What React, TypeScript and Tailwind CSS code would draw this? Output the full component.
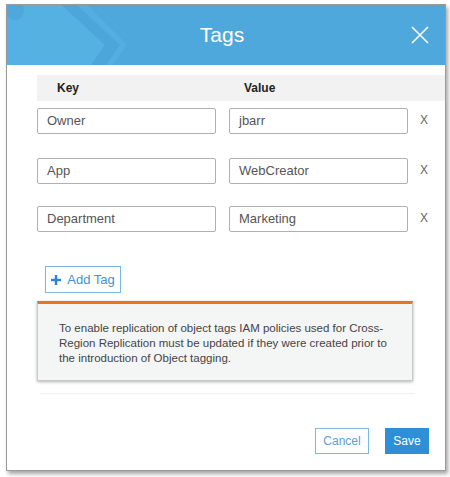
import React from "react";

const rows = [
  { k: "Owner", v: "jbarr", top: "mt-[7px]" },
  { k: "App", v: "WebCreator", top: "mt-[24px]" },
  { k: "Department", v: "Marketing", top: "mt-[22px]" },
];

export default function App() {
  return (
    <div className="w-[450px] h-[477px] bg-white pt-[4px] pl-[6px]" style={{ fontFamily: '"Liberation Sans", Arial, sans-serif' }}>
      <div className="w-[440px] h-[467px] border border-[#9a9a9a] bg-white shadow-[2px_3px_4px_rgba(0,0,0,0.35)] flex flex-col">
        {/* Header */}
        <div className="relative h-[60px] bg-[#4fa8dc] flex items-center justify-center overflow-hidden">
          <svg className="absolute left-0 top-0" width="140" height="60" viewBox="0 0 140 60">
            <polygon points="0,0 55,0 98,40 84,60 0,60" fill="#56b1e3" />
            <polygon points="55,0 70,0 113,40 99,60 84,60 98,40" fill="#4da6da" />
            <polygon points="70,0 80,0 120,40 106,60 99,60 113,40" fill="#54afe1" />
            <circle cx="8" cy="6" r="9" fill="#4ea8dc" />
          </svg>
          <span className="relative text-white text-[21px] -ml-[8px]">Tags</span>
          <svg className="absolute right-[16px] top-[21px]" width="18" height="18" viewBox="0 0 18 18">
            <path d="M1 1 L17 17 M17 1 L1 17" stroke="white" strokeWidth="1.6" />
          </svg>
        </div>

        {/* Body */}
        <div className="flex flex-col">
          <div className="mt-[10px] ml-[30px] h-[26px] bg-[#f2f2f2] flex items-center text-[12px] font-bold text-[#222]">
            <span className="ml-[20px] w-[187px]">Key</span>
            <span>Value</span>
          </div>

          {rows.map((r) => (
            <div key={r.k} className={`${r.top} ml-[30px] flex items-center`}>
              <div className="w-[179px] h-[26px] border border-[#b0b0b0] rounded-[2px] flex items-center px-[9px] text-[13px] text-[#555]">
                {r.k}
              </div>
              <div className="ml-[13px] w-[179px] h-[26px] border border-[#b0b0b0] rounded-[2px] flex items-center px-[9px] text-[13px] text-[#555]">
                {r.v}
              </div>
              <span className="ml-[12px] -mt-[3px] text-[12px] text-[#666]">X</span>
            </div>
          ))}

          <div className="mt-[34px] ml-[38px]">
            <div className="w-[76px] h-[27px] border border-[#7ab8e3] flex items-center justify-center gap-[6px] text-[13px] text-[#3f94d2]">
              <svg width="10" height="10" viewBox="0 0 10 10">
                <path d="M5 0 V10 M0 5 H10" stroke="#2d86cc" strokeWidth="2.4" />
              </svg>
              <span>Add Tag</span>
            </div>
          </div>

          <div className="mt-[8px] ml-[30px] w-[376px] h-[80px] bg-[#f4f5f5] border-t-[3px] border-t-[#e8741d] border-x border-b border-x-[#c8c8c8] border-b-[#c8c8c8] shadow-[0_1px_3px_rgba(0,0,0,0.3)] pl-[21px] pt-[17px] text-[11.5px] leading-[15px] text-[#444] whitespace-nowrap">
            To enable replication of object tags IAM policies used for Cross-
            <br />
            Region Replication must be updated if they were created prior to
            <br />
            the introduction of Object tagging.
          </div>

          <div className="mt-[12px] ml-[33px] w-[375px] h-px bg-[#f0f0f0]" />

          <div className="mt-[34px] flex justify-end pr-[16px] gap-[16px]">
            <div className="w-[54px] h-[26px] border border-[#7ab8e3] flex items-center justify-center text-[12px] text-[#5a9fd4]">
              Cancel
            </div>
            <div className="w-[44px] h-[26px] bg-[#2f8fd6] flex items-center justify-center text-[12px] text-white">
              Save
            </div>
          </div>
        </div>
      </div>
    </div>
  );
}
